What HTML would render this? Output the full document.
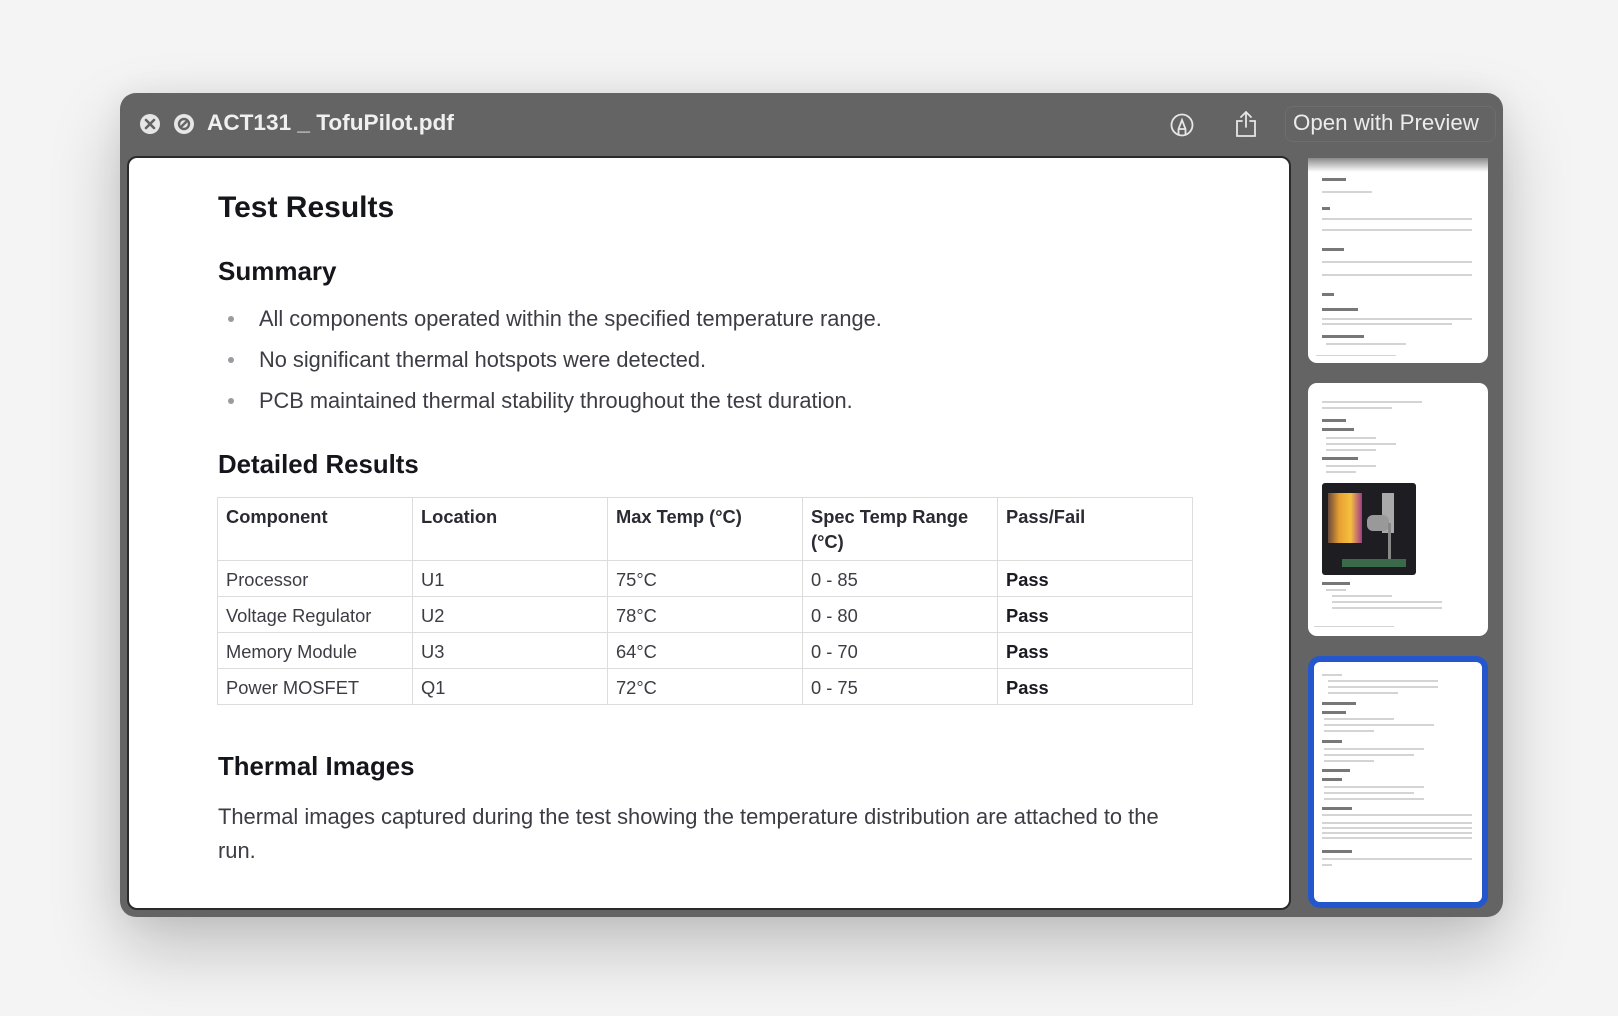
<!DOCTYPE html>
<html><head><meta charset="utf-8"><style>
*{margin:0;padding:0;box-sizing:border-box}
body{width:1618px;height:1016px;background:#f4f4f4;font-family:"Liberation Sans",Arial,sans-serif;position:relative;overflow:hidden}
.win{position:absolute;left:120px;top:93px;width:1383px;height:824px;background:#646464;border-radius:16px;box-shadow:0 30px 70px rgba(0,0,0,0.22),0 0 30px rgba(0,0,0,0.06)}
.page{position:absolute;left:127px;top:156px;width:1164px;height:754px;background:#fff;border:2px solid #2a2a2a;border-radius:10px;overflow:hidden}
.a{position:absolute;white-space:nowrap;line-height:1}
.h{color:#15151c;font-weight:bold}
.t{color:#3c3c44;font-size:21.8px}
.dot{position:absolute;width:6px;height:6px;border-radius:3px;background:#9a9aa0}
table{position:absolute;left:217px;top:497px;border-collapse:collapse;font-size:18.3px;color:#3c3c44}
td,th{border:1.5px solid #dcdcdc;width:195px;text-align:left;vertical-align:top;padding:0 8px;line-height:25px}
th{height:63px;padding-top:6px;font-weight:bold;color:#2a2a33}
td{height:36px;padding-top:6px}
td b{color:#1a1a22}
.th{position:absolute;left:1308px;width:180px;background:#fff;border-radius:9px;overflow:hidden}
.l{position:absolute;height:2px;background:#d4d4d4}
.lb{position:absolute;height:3px;background:#777}
</style></head><body>
<div class="win"></div>
<svg style="position:absolute;left:139px;top:113px" width="22" height="22" viewBox="0 0 22 22"><circle cx="11" cy="11" r="10" fill="#e6e6e6"/><path d="M7 7L15 15M15 7L7 15" stroke="#646464" stroke-width="2.6" stroke-linecap="round"/></svg>
<svg style="position:absolute;left:173px;top:113px" width="22" height="22" viewBox="0 0 22 22"><circle cx="11" cy="11" r="10" fill="#e6e6e6"/><circle cx="11" cy="11" r="5" fill="none" stroke="#646464" stroke-width="2.4"/><path d="M14.5 7.5L7.5 14.5" stroke="#646464" stroke-width="2.4"/></svg>
<div class="a" style="left:207px;top:112px;font-size:22.6px;font-weight:bold;color:#f0f0f0">ACT131 _ TofuPilot.pdf</div>
<svg style="position:absolute;left:1170px;top:113px" width="24" height="24" viewBox="0 0 24 24" fill="none" stroke="#e6e6e6" stroke-width="1.8"><circle cx="12" cy="12" r="10.5"/><path d="M8.5 21.5V16L12 7L15.5 16V21.5M8.5 16H15.5"/></svg>
<div style="position:absolute;left:1234px;top:110px;width:24px;height:28px">
<svg width="24" height="28" viewBox="0 0 24 28" fill="none" stroke="#e6e6e6" stroke-width="1.8" stroke-linecap="round"><path d="M12 2V17M7 7L12 2L17 7M8 11H3V26H21V11H16"/></svg></div>
<div style="position:absolute;left:1285px;top:106px;width:211px;height:36px;border-radius:8px;border:1px solid #6e6e6e"></div>
<div class="a" style="left:1293px;top:112px;font-size:22.3px;color:#ececec">Open with Preview</div>

<div class="page"></div>
<div class="a h" style="left:218px;top:193px;font-size:30px">Test Results</div>
<div class="a h" style="left:218px;top:258px;font-size:26px">Summary</div>
<div class="dot" style="left:228px;top:316px"></div>
<div class="a t" style="left:259px;top:308px">All components operated within the specified temperature range.</div>
<div class="dot" style="left:228px;top:357px"></div>
<div class="a t" style="left:259px;top:349px">No significant thermal hotspots were detected.</div>
<div class="dot" style="left:228px;top:398px"></div>
<div class="a t" style="left:259px;top:390px">PCB maintained thermal stability throughout the test duration.</div>
<div class="a h" style="left:218px;top:453px;font-size:25.8px">Detailed Results</div>
<table>
<tr><th>Component</th><th>Location</th><th>Max Temp (°C)</th><th>Spec Temp Range<br>(°C)</th><th>Pass/Fail</th></tr>
<tr><td>Processor</td><td>U1</td><td>75°C</td><td>0 - 85</td><td><b>Pass</b></td></tr>
<tr><td>Voltage Regulator</td><td>U2</td><td>78°C</td><td>0 - 80</td><td><b>Pass</b></td></tr>
<tr><td>Memory Module</td><td>U3</td><td>64°C</td><td>0 - 70</td><td><b>Pass</b></td></tr>
<tr><td>Power MOSFET</td><td>Q1</td><td>72°C</td><td>0 - 75</td><td><b>Pass</b></td></tr>
</table>
<div class="a h" style="left:218px;top:755px;font-size:25.8px">Thermal Images</div>
<div class="a t" style="left:218px;top:800px;line-height:34px;font-size:21.9px">Thermal images captured during the test showing the temperature distribution are attached to the<br>run.</div>

<!-- thumbnails -->
<div class="th" style="top:158px;height:205px;border-radius:0 0 9px 9px">
<div style="position:absolute;left:0;top:0;width:180px;height:14px;background:linear-gradient(#8a8a8a,#fff)"></div>
<div class="lb" style="left:14px;top:20px;width:24px"></div>
<div class="l" style="left:14px;top:33px;width:50px"></div>
<div class="lb" style="left:14px;top:49px;width:8px"></div>
<div class="l" style="left:14px;top:60px;width:150px"></div>
<div class="l" style="left:14px;top:71px;width:150px"></div>
<div class="lb" style="left:14px;top:90px;width:22px"></div>
<div class="l" style="left:14px;top:103px;width:150px"></div>
<div class="l" style="left:14px;top:116px;width:150px"></div>
<div class="lb" style="left:14px;top:135px;width:12px"></div>
<div class="lb" style="left:14px;top:150px;width:36px"></div>
<div class="l" style="left:14px;top:160px;width:150px"></div>
<div class="l" style="left:14px;top:165px;width:130px"></div>
<div class="lb" style="left:14px;top:177px;width:42px"></div>
<div class="l" style="left:18px;top:185px;width:80px"></div>
<div class="l" style="left:8px;top:197px;width:80px;height:1px"></div>
</div>
<div class="th" style="top:383px;height:253px">
<div class="l" style="left:14px;top:18px;width:100px"></div>
<div class="l" style="left:14px;top:24px;width:70px"></div>
<div class="lb" style="left:14px;top:36px;width:24px"></div>
<div class="lb" style="left:14px;top:45px;width:32px"></div>
<div class="l" style="left:18px;top:54px;width:50px"></div>
<div class="l" style="left:18px;top:60px;width:70px"></div>
<div class="l" style="left:18px;top:66px;width:50px"></div>
<div class="lb" style="left:14px;top:74px;width:36px"></div>
<div class="l" style="left:18px;top:82px;width:50px"></div>
<div class="l" style="left:18px;top:88px;width:30px"></div>
<div style="position:absolute;left:14px;top:100px;width:94px;height:92px;background:#1e1e22;border-radius:3px;overflow:hidden">
<div style="position:absolute;left:6px;top:10px;width:34px;height:50px;background:linear-gradient(90deg,#6a4a3a,#e8a030,#f5c040,#a03a8a)"></div>
<div style="position:absolute;left:60px;top:10px;width:12px;height:40px;background:#aaa"></div>
<div style="position:absolute;left:45px;top:32px;width:22px;height:16px;background:#999;border-radius:6px"></div>
<div style="position:absolute;left:66px;top:40px;width:3px;height:40px;background:#888"></div>
<div style="position:absolute;left:20px;top:76px;width:64px;height:8px;background:#3a6a4a"></div>
</div>
<div class="lb" style="left:14px;top:199px;width:28px"></div>
<div class="l" style="left:18px;top:206px;width:20px"></div>
<div class="l" style="left:24px;top:212px;width:60px"></div>
<div class="l" style="left:24px;top:218px;width:110px"></div>
<div class="l" style="left:24px;top:224px;width:110px"></div>
<div class="l" style="left:6px;top:243px;width:80px;height:1px"></div>
</div>
<div class="th" style="top:656px;height:252px;border:6px solid #2457cc;border-radius:12px">
<div class="l" style="left:8px;top:12px;width:20px"></div>
<div class="l" style="left:14px;top:18px;width:110px"></div>
<div class="l" style="left:14px;top:24px;width:110px"></div>
<div class="l" style="left:14px;top:30px;width:70px"></div>
<div class="lb" style="left:8px;top:40px;width:34px"></div>
<div class="lb" style="left:8px;top:49px;width:24px"></div>
<div class="l" style="left:10px;top:56px;width:70px"></div>
<div class="l" style="left:10px;top:62px;width:110px"></div>
<div class="l" style="left:10px;top:68px;width:50px"></div>
<div class="lb" style="left:8px;top:78px;width:20px"></div>
<div class="l" style="left:10px;top:86px;width:100px"></div>
<div class="l" style="left:10px;top:92px;width:90px"></div>
<div class="l" style="left:10px;top:98px;width:50px"></div>
<div class="lb" style="left:8px;top:107px;width:28px"></div>
<div class="lb" style="left:8px;top:116px;width:20px"></div>
<div class="l" style="left:10px;top:124px;width:100px"></div>
<div class="l" style="left:10px;top:130px;width:90px"></div>
<div class="l" style="left:10px;top:136px;width:100px"></div>
<div class="lb" style="left:8px;top:145px;width:30px"></div>
<div class="l" style="left:8px;top:152px;width:150px"></div>
<div class="l" style="left:8px;top:160px;width:150px"></div>
<div class="l" style="left:8px;top:165px;width:150px"></div>
<div class="l" style="left:8px;top:170px;width:150px"></div>
<div class="l" style="left:8px;top:175px;width:150px"></div>
<div class="lb" style="left:8px;top:188px;width:30px"></div>
<div class="l" style="left:8px;top:196px;width:150px"></div>
<div class="l" style="left:8px;top:202px;width:10px"></div>
</div>
</body></html>
